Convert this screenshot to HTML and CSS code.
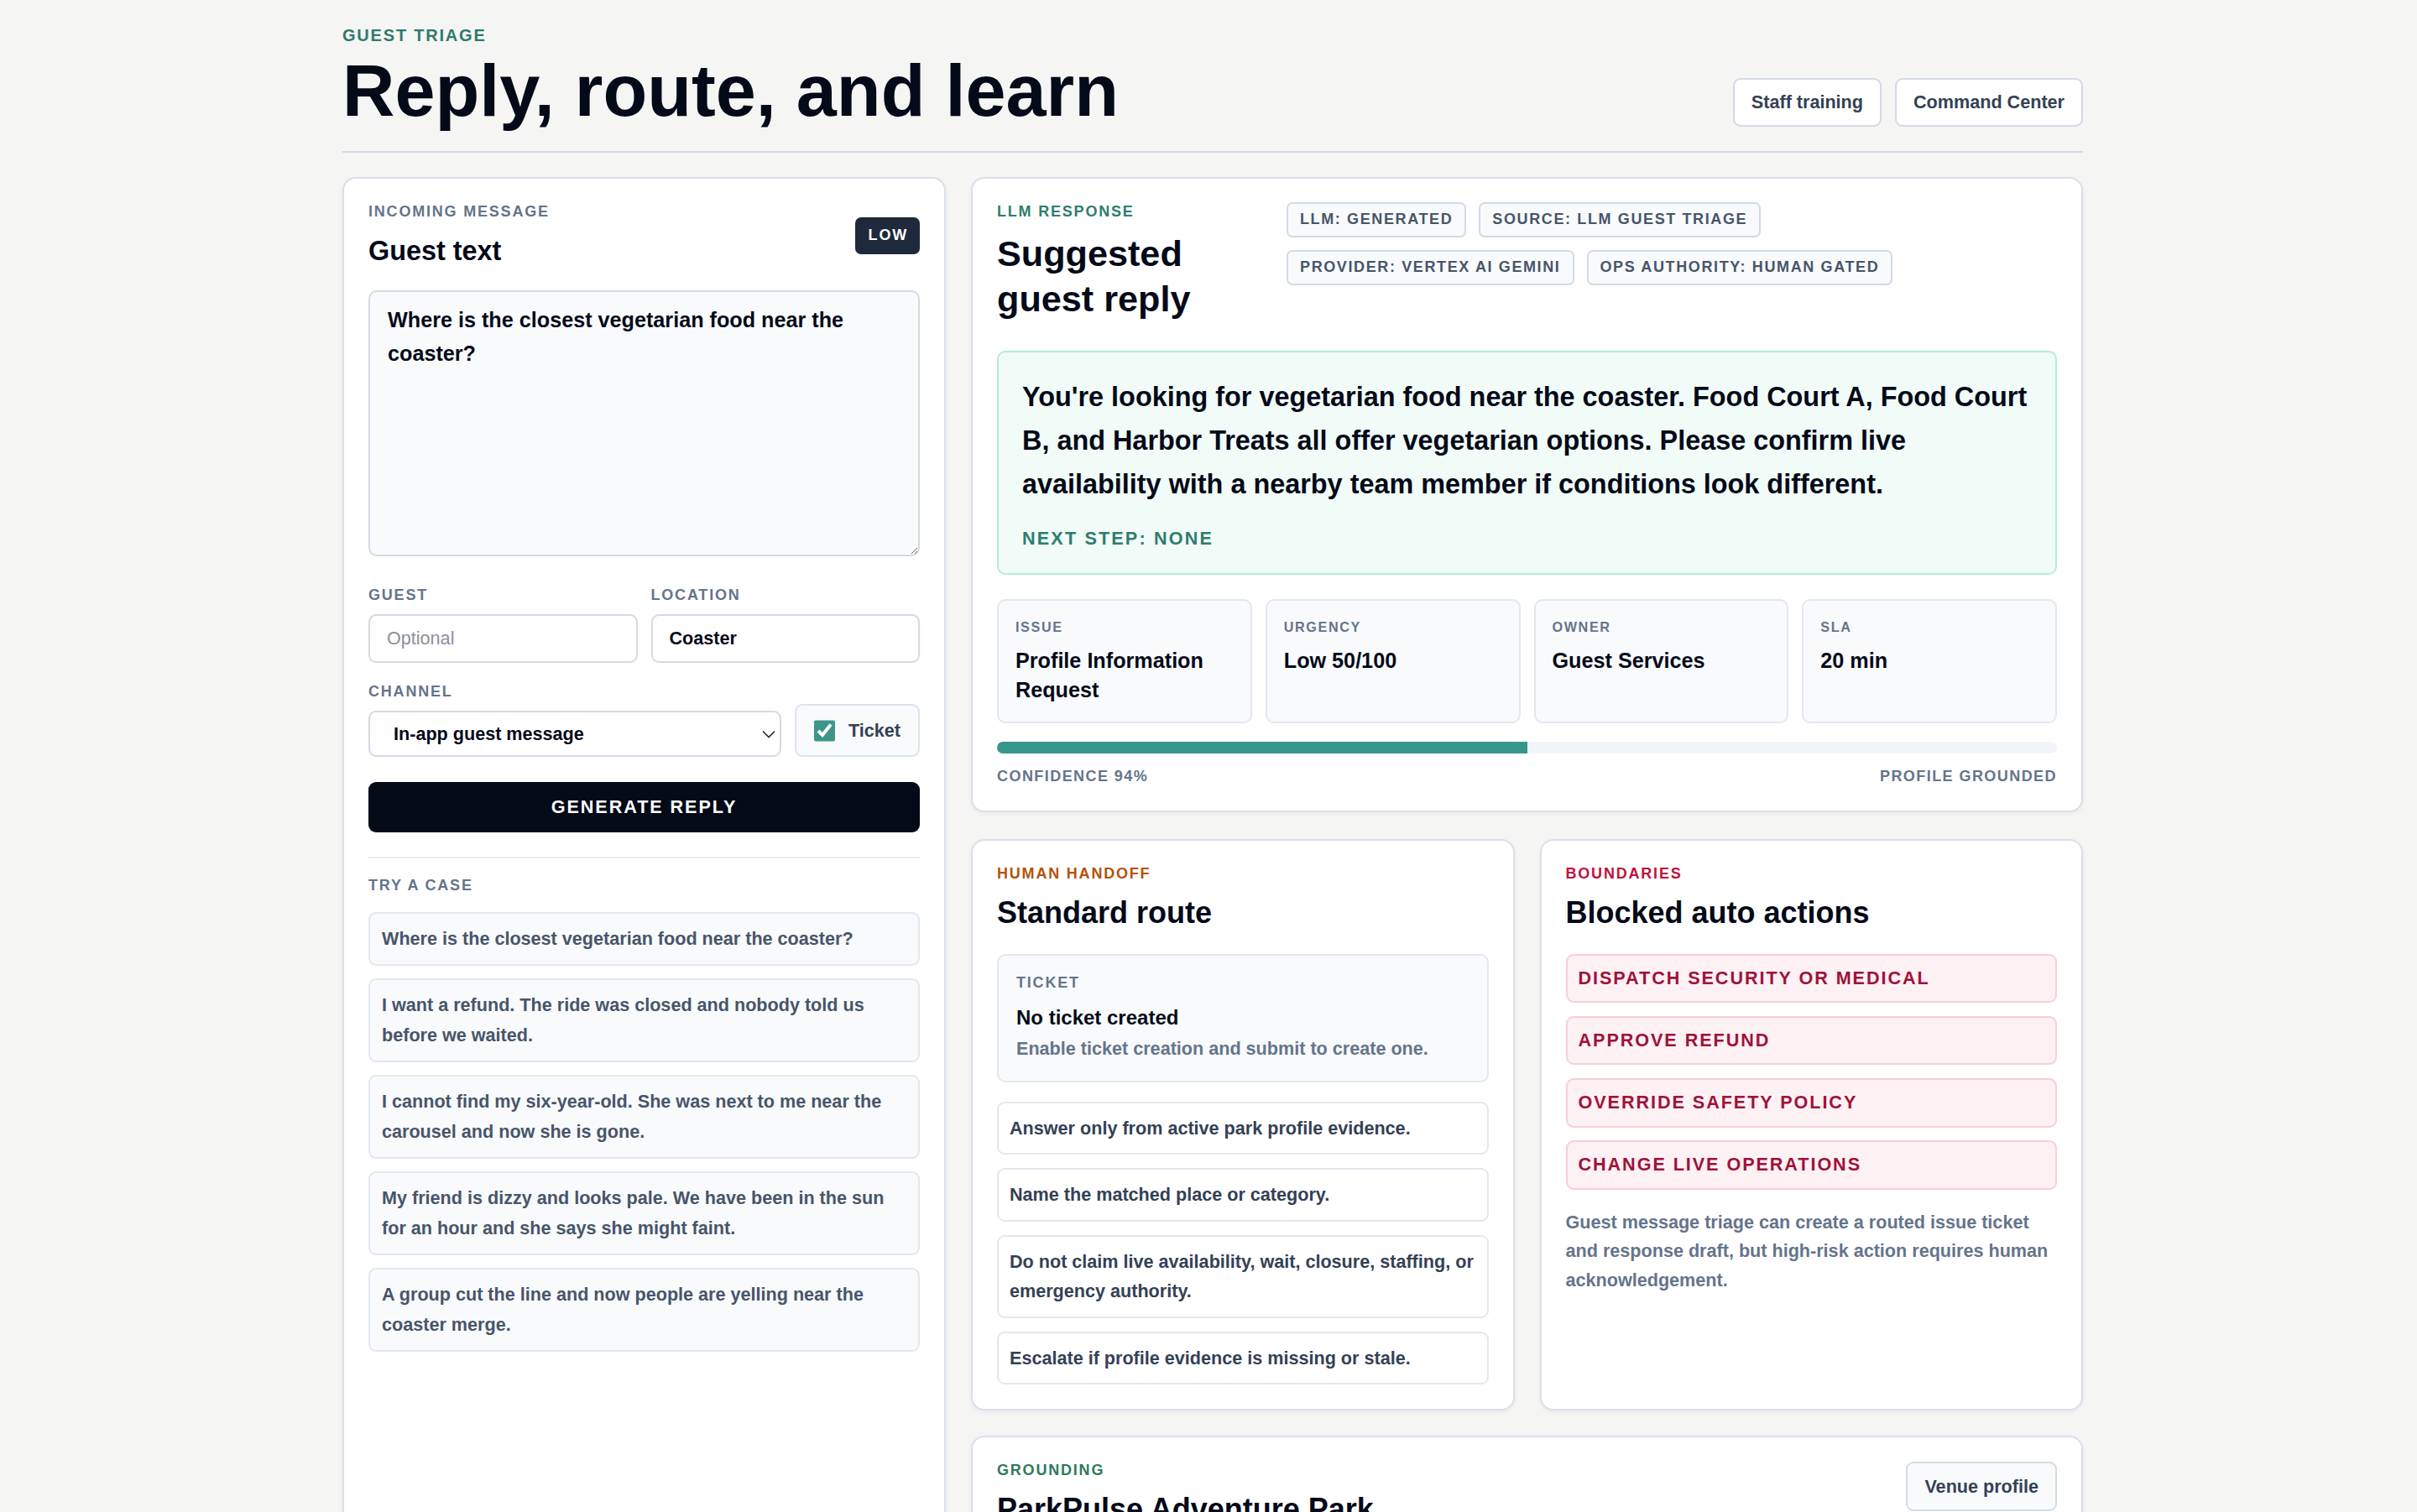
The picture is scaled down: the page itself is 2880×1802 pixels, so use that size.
FILE: index.html
```html
<!DOCTYPE html>
<html lang="en">
<head>
    <meta charset="UTF-8">
    <meta name="viewport" content="width=device-width, initial-scale=1.0">
    <title>Guest triage</title>
    <link rel="stylesheet" href="styles.css">
</head>
<body>
<div class="page">
    <header class="top-bar">
        <div>
            <p class="eyebrow brand">GUEST TRIAGE</p>
            <h1 class="page-title">Reply, route, and learn</h1>
        </div>
        <nav class="top-actions">
            <button type="button" class="ghost-btn">Staff training</button>
            <button type="button" class="ghost-btn">Command Center</button>
        </nav>
    </header>

    <main class="triage-grid">
        <!-- left: incoming message form -->
        <form class="card intake">
            <div class="card-head">
                <div>
                    <p class="eyebrow">INCOMING MESSAGE</p>
                    <h2 class="card-title small">Guest text</h2>
                </div>
                <span class="level-badge">LOW</span>
            </div>

            <textarea class="guest-text" name="message">Where is the closest vegetarian food near the coaster?</textarea>

            <div class="field-pair">
                <label class="field">
                    <span class="eyebrow">GUEST</span>
                    <input type="text" name="guest" placeholder="Optional">
                </label>
                <label class="field">
                    <span class="eyebrow">LOCATION</span>
                    <input type="text" name="location" value="Coaster">
                </label>
            </div>

            <div class="channel-row">
                <label class="field">
                    <span class="eyebrow">CHANNEL</span>
                    <span class="select-wrap">
                        <select name="channel">
                            <option>In-app guest message</option>
                            <option>SMS</option>
                            <option>Email</option>
                        </select>
                        <svg class="chevron" width="16" height="10" viewBox="0 0 16 10"><path d="M1 1.5l7 7 7-7" fill="none" stroke="#1f2937" stroke-width="1.6"/></svg>
                    </span>
                </label>
                <label class="ticket-toggle">
                    <input type="checkbox" name="ticket" checked>
                    <span>Ticket</span>
                </label>
            </div>

            <button type="button" class="generate-btn">GENERATE REPLY</button>

            <hr class="split">

            <p class="eyebrow case-label">TRY A CASE</p>
            <div class="case-list">
                <button type="button" class="case">Where is the closest vegetarian food near the coaster?</button>
                <button type="button" class="case">I want a refund. The ride was closed and nobody told us before we waited.</button>
                <button type="button" class="case">I cannot find my six-year-old. She was next to me near the carousel and now she is gone.</button>
                <button type="button" class="case">My friend is dizzy and looks pale. We have been in the sun for an hour and she says she might faint.</button>
                <button type="button" class="case">A group cut the line and now people are yelling near the coaster merge.</button>
            </div>
        </form>

        <div class="stack">
            <!-- generated reply -->
            <section class="card response">
                <div class="response-head">
                    <div class="response-title">
                        <p class="eyebrow teal">LLM RESPONSE</p>
                        <h2 class="card-title large">Suggested guest reply</h2>
                    </div>
                    <div class="chips">
                        <span class="chip">LLM: GENERATED</span>
                        <span class="chip">SOURCE: LLM GUEST TRIAGE</span>
                        <span class="chip">PROVIDER: VERTEX AI GEMINI</span>
                        <span class="chip">OPS AUTHORITY: HUMAN GATED</span>
                    </div>
                </div>

                <div class="reply-box">
                    <p class="reply-text">You're looking for vegetarian food near the coaster. Food Court A, Food Court B, and Harbor Treats all offer vegetarian options. Please confirm live availability with a nearby team member if conditions look different.</p>
                    <p class="next-step">NEXT STEP: NONE</p>
                </div>

                <div class="metrics">
                    <div class="metric">
                        <p class="metric-label">ISSUE</p>
                        <p class="metric-value">Profile Information Request</p>
                    </div>
                    <div class="metric">
                        <p class="metric-label">URGENCY</p>
                        <p class="metric-value">Low 50/100</p>
                    </div>
                    <div class="metric">
                        <p class="metric-label">OWNER</p>
                        <p class="metric-value">Guest Services</p>
                    </div>
                    <div class="metric">
                        <p class="metric-label">SLA</p>
                        <p class="metric-value">20 min</p>
                    </div>
                </div>

                <div class="meter"><div class="meter-fill" style="width: 50%"></div></div>
                <div class="meter-foot">
                    <span>CONFIDENCE 94%</span>
                    <span>PROFILE GROUNDED</span>
                </div>
            </section>

            <div class="pair">
                <section class="card handoff">
                    <p class="eyebrow amber">HUMAN HANDOFF</p>
                    <h2 class="card-title">Standard route</h2>
                    <div class="ticket-box">
                        <p class="eyebrow">TICKET</p>
                        <p class="ticket-title">No ticket created</p>
                        <p class="ticket-sub">Enable ticket creation and submit to create one.</p>
                    </div>
                    <ul class="rule-list">
                        <li>Answer only from active park profile evidence.</li>
                        <li>Name the matched place or category.</li>
                        <li>Do not claim live availability, wait, closure, staffing, or emergency authority.</li>
                        <li>Escalate if profile evidence is missing or stale.</li>
                    </ul>
                </section>

                <section class="card bounds">
                    <p class="eyebrow crimson">BOUNDARIES</p>
                    <h2 class="card-title">Blocked auto actions</h2>
                    <ul class="blocked-list">
                        <li>DISPATCH SECURITY OR MEDICAL</li>
                        <li>APPROVE REFUND</li>
                        <li>OVERRIDE SAFETY POLICY</li>
                        <li>CHANGE LIVE OPERATIONS</li>
                    </ul>
                    <p class="bounds-note">Guest message triage can create a routed issue ticket and response draft, but high-risk action requires human acknowledgement.</p>
                </section>
            </div>

            <section class="card grounding">
                <div class="card-head top">
                    <div>
                        <p class="eyebrow green">GROUNDING</p>
                        <h2 class="card-title">ParkPulse Adventure Park</h2>
                    </div>
                    <button type="button" class="soft-btn">Venue profile</button>
                </div>
            </section>
        </div>
    </main>
</div>
</body>
</html>
```

FILE: styles.css
```css
* {box-sizing: border-box;}
body {margin: 0; background: #f5f5f3; color: #050a18; font-family: "Liberation Sans", Arial, sans-serif;}
p, h1, h2, ul {margin: 0;}
ul {padding: 0; list-style: none;}
button, input, select, textarea {font-family: inherit;}

/* page shell */
.page {box-sizing: content-box; max-width: 2074px; margin: 0 auto; padding: 30px 0 80px 10px;}
.top-bar {display: flex; justify-content: space-between; align-items: flex-end; padding-bottom: 29px; border-bottom: 2px solid #d3dae5;}
.page-title {margin-top: 11px; font-size: 86.4px; line-height: 1; font-weight: 700; color: #050a18;}
.top-actions {display: flex; gap: 16px;}
.ghost-btn {height: 58px; padding: 0 20px; border: 2px solid #d3dae5; border-radius: 9px; background: #fff; color: #334155; font-size: 21.6px; font-weight: 700;}

/* labels */
.eyebrow {display: block; font-size: 18px; line-height: 21.6px; font-weight: 700; letter-spacing: 0.1em; color: #64748b;}
.eyebrow.brand {font-size: 20px; line-height: 24px; letter-spacing: 0.09em; color: #2f7a6d;}
.eyebrow.teal {color: #2e7d6f;}
.eyebrow.amber {color: #b45309;}
.eyebrow.crimson {color: #be123c;}
.eyebrow.green {color: #2d7a5c;}

/* grid */
.triage-grid {display: grid; grid-template-columns: 719px 1fr; gap: 30px; margin-top: 29px;}
.stack {display: flex; flex-direction: column; gap: 30px;}
.stack .response {margin-bottom: 2px;}
.pair {display: grid; grid-template-columns: 1fr 1fr; gap: 30px;}
.card {background: #fff; border: 2px solid #d9e0ea; border-radius: 16px; padding: 29px; box-shadow: 0 2px 5px rgba(15, 23, 42, 0.06);}
.card-head {display: flex; justify-content: space-between; align-items: center;}
.card-head.top {align-items: flex-start;}
.card-title {margin-top: 13px; font-size: 36px; line-height: 43.2px; font-weight: 700; color: #050a18;}
.card-title.small {margin-top: 15px; font-size: 32.4px; line-height: 40px;}
.card-title.large {margin-top: 11px; font-size: 43.2px; line-height: 54px;}

/* intake form */
.level-badge {padding: 11px 14px 11px 16px; border-radius: 7px; background: #1e293b; color: #fff; font-size: 18px; line-height: 21.6px; font-weight: 700; letter-spacing: 0.1em;}
.guest-text {display: block; width: 100%; height: 317px; margin-top: 27px; padding: 13px 21px; border: 2px solid #d3dae5; border-radius: 10px; background: #f8fafc; color: #050a18; font-size: 25.2px; line-height: 40.4px; font-weight: 700;}
.field-pair {display: grid; grid-template-columns: 1fr 1fr; gap: 16px; margin-top: 36px;}
.field {display: flex; flex-direction: column; gap: 11px;}
.field input {height: 58px; width: 100%; padding: 0 20px; border: 2px solid #d3dae5; border-radius: 9px; background: #fff; color: #050a18; font-size: 21.6px; font-weight: 700;}
.field input::placeholder {color: #8b9099; font-weight: 400;}
.channel-row {display: grid; grid-template-columns: 1fr 149px; gap: 16px; align-items: end; margin-top: 24px;}
.channel-row .field {gap: 12px;}
.select-wrap {position: relative; display: block;}
.select-wrap select {appearance: none; width: 100%; height: 55px; padding: 0 44px 0 28px; border: 2px solid #d3dae5; border-radius: 9px; background: #fff; color: #050a18; font-size: 21.6px; font-weight: 700;}
.select-wrap .chevron {position: absolute; right: 7px; top: 23px; pointer-events: none;}
.ticket-toggle {display: flex; align-items: center; gap: 16px; height: 63px; padding: 0 21px; border: 2px solid #dde3ec; border-radius: 9px; background: #f8fafc; color: #334155; font-size: 21.6px; font-weight: 700;}
.ticket-toggle input {width: 26px; height: 26px; margin: 0; accent-color: #3d9688;}
.generate-btn {width: 100%; height: 60px; margin-top: 30px; border: 0; border-radius: 9px; background: #050a18; color: #fff; font-size: 21.6px; font-weight: 700; letter-spacing: 0.09em;}
.split {height: 0; margin: 29px 0 0; border: 0; border-top: 2px solid #e7ecf2;}
.case-label {margin-top: 22px;}
.case-list {display: flex; flex-direction: column; gap: 15px; margin-top: 20px;}
.case {text-align: left; padding: 12px 14px; border: 2px solid #e3e8ef; border-radius: 9px; background: #f8fafc; color: #475569; font-size: 21.6px; line-height: 36px; font-weight: 700;}

/* reply card */
.response-head {display: flex; gap: 32px; align-items: flex-start;}
.response-title {flex: 0 0 313px;}
.chips {flex: 1; display: flex; flex-wrap: wrap; gap: 15px; margin-top: -1px;}
.chip {padding: 8px 14px; border: 2px solid #d3dae5; border-radius: 7px; background: #f8fafc; color: #475569; font-size: 18px; line-height: 21.6px; font-weight: 700; letter-spacing: 0.09em;}
.reply-box {margin-top: 35px; padding: 28px 22px 28px 28px; border: 2px solid #b3ecd9; border-radius: 10px; background: #f1fbf8;}
.reply-text {font-size: 32.4px; line-height: 51.8px; font-weight: 700; color: #050a18;}
.next-step {margin-top: 26px; font-size: 21.6px; line-height: 26px; font-weight: 700; letter-spacing: 0.1em; color: #2e7d6f;}
.metrics {display: grid; grid-template-columns: repeat(4, 1fr); gap: 16px; margin-top: 29px;}
.metric {padding: 22px 20px 20px; border: 2px solid #e3e8ef; border-radius: 10px; background: #f8fafc; min-height: 148px;}
.metric-label {font-size: 16.2px; line-height: 19.4px; font-weight: 700; letter-spacing: 0.1em; color: #64748b;}
.metric-value {margin-top: 12px; font-size: 25.2px; line-height: 35.3px; font-weight: 700; color: #050a18;}
.meter {height: 14px; margin-top: 22px; border-radius: 7px; background: #f1f5f9; overflow: hidden;}
.meter-fill {height: 100%; background: #36968a;}
.meter-foot {display: flex; justify-content: space-between; margin-top: 17px; font-size: 18px; line-height: 21.6px; font-weight: 700; letter-spacing: 0.08em; color: #64748b;}

/* handoff card */
.ticket-box {margin-top: 28px; padding: 22px 21px 21px; border: 2px solid #e3e8ef; border-radius: 10px; background: #f8fafc;}
.ticket-title {margin-top: 15px; font-size: 24px; line-height: 31px; font-weight: 700; color: #050a18;}
.ticket-sub {margin-top: 6px; font-size: 21.6px; line-height: 32.4px; font-weight: 700; color: #64748b;}
.rule-list {display: flex; flex-direction: column; gap: 16px; margin-top: 23px;}
.rule-list li {padding: 12px 13px; border: 2px solid #e3e8ef; border-radius: 9px; background: #fff; color: #334155; font-size: 21.6px; line-height: 35.5px; font-weight: 700;}

/* boundaries card */
.blocked-list {display: flex; flex-direction: column; gap: 15.5px; margin-top: 28px;}
.blocked-list li {padding: 14.3px 13px; border: 2px solid #f7cfd7; border-radius: 9px; background: #fdf1f3; color: #9f1239; font-size: 21.6px; line-height: 26px; font-weight: 700; letter-spacing: 0.09em;}
.bounds-note {margin-top: 22px; font-size: 21.6px; line-height: 34.5px; font-weight: 700; color: #64748b;}

/* grounding card */
.soft-btn {height: 59px; padding: 0 20px; border: 2px solid #d3dae5; border-radius: 9px; background: #f8fafc; color: #334155; font-size: 21.6px; font-weight: 700;}
```
